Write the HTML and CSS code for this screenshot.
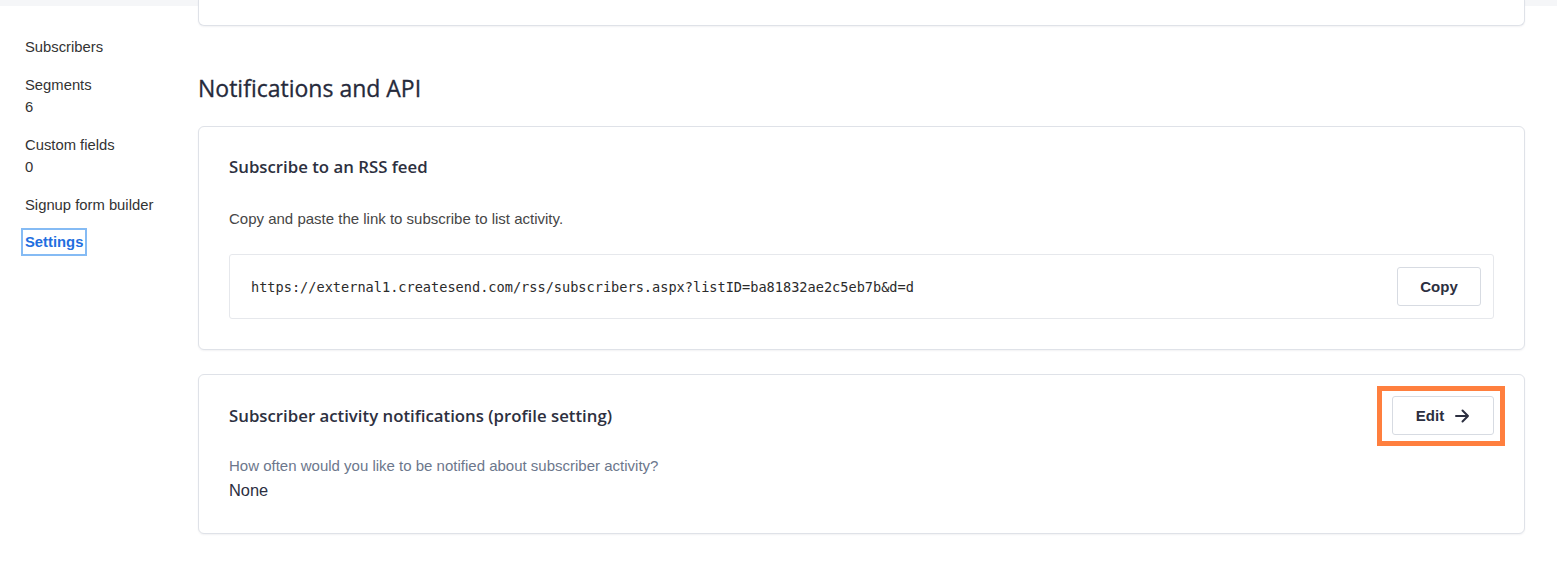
FILE: index.html
```html
<!DOCTYPE html>
<html lang="en">
<head>
    <meta charset="UTF-8">
    <meta name="viewport" content="width=device-width, initial-scale=1.0">
    <title>List settings</title>
    <link rel="stylesheet" href="styles.css">
</head>
<body>
    <div class="topbar"></div>
    <div class="layout">
        <nav class="sidebar">
            <a class="nav-item" href="#">Subscribers</a>
            <a class="nav-item" href="#">Segments<span class="count">6</span></a>
            <a class="nav-item" href="#">Custom fields<span class="count">0</span></a>
            <a class="nav-item" href="#">Signup form builder</a>
            <a class="nav-item active" href="#">Settings</a>
        </nav>

        <main class="content">
            <div class="card card-tail"></div>

            <h2 class="section-title">Notifications and API</h2>

            <section class="card">
                <h3 class="card-title">Subscribe to an RSS feed</h3>
                <p class="card-text">Copy and paste the link to subscribe to list activity.</p>
                <div class="link-box">
                    <code class="link">https://external1.createsend.com/rss/subscribers.aspx?listID=ba81832ae2c5eb7b&amp;d=d</code>
                    <button class="btn">Copy</button>
                </div>
            </section>

            <section class="card">
                <div class="card-head">
                    <h3 class="card-title">Subscriber activity notifications (profile setting)</h3>
                    <div class="highlight">
                        <button class="btn btn-edit">
                            Edit
                            <svg width="16" height="14" viewBox="0 0 16 14" fill="none" stroke="currentColor" stroke-width="2" stroke-linecap="round" stroke-linejoin="round">
                                <path d="M2 7h12M8.5 1.5 14 7l-5.5 5.5"/>
                            </svg>
                        </button>
                    </div>
                </div>
                <p class="field-label">How often would you like to be notified about subscriber activity?</p>
                <p class="field-value">None</p>
            </section>
        </main>
    </div>
</body>
</html>
```

FILE: styles.css
```css
body {
    margin: 0;
    background-color: #fff;
    font-family: 'Liberation Sans', Arial, sans-serif;
    color: #333;
}

.topbar {
    height: 6px;
    background-color: #f5f6f8;
}

.layout {
    display: flex;
}

/* left navigation */
.sidebar {
    width: 198px;
    flex-shrink: 0;
    padding: 30px 0 0 25px;
    box-sizing: border-box;
    display: flex;
    flex-direction: column;
    align-items: flex-start;
    gap: 16px;
}

.nav-item {
    display: flex;
    flex-direction: column;
    font-size: 14.8px;
    line-height: 22px;
    color: #333;
    text-decoration: none;
}

.nav-item .count {
    color: #333;
}

.nav-item.active {
    color: #1f6fe0;
    font-weight: bold;
    outline: 2px solid #85bbf4;
    outline-offset: 1px;
    padding: 0 1px;
    margin-left: -1px;
    margin-top: -1px;
}

/* main column */
.content {
    width: 1327px;
    margin-top: -6px;
}

.card {
    background: #fff;
    border: 1px solid #dfe2e8;
    border-radius: 6px;
    box-shadow: 0 1px 2px rgba(30, 40, 60, 0.06);
    padding: 30px 30px 30px;
    margin-bottom: 24px;
}

.card-tail {
    height: 25px;
    padding: 0;
    border-top: none;
    border-radius: 0 0 6px 6px;
    margin-bottom: 0;
}

.section-title {
    font-family: 'Open Sans', 'Noto Sans', sans-serif;
    font-weight: 500;
    font-size: 23px;
    line-height: 28px;
    color: #262a3b;
    -webkit-text-stroke: 0.3px #262a3b;
    margin: 48px 0 24px;
}

.card-title {
    font-family: 'Open Sans', 'Noto Sans', sans-serif;
    font-weight: 600;
    font-size: 16.8px;
    line-height: 20px;
    color: #2d3040;
    margin: 0;
}

.card-text {
    font-size: 15px;
    line-height: 22px;
    color: #464646;
    margin: 31px 0 24px;
}

.link-box {
    display: flex;
    justify-content: space-between;
    align-items: center;
    border: 1px solid #e6e8ec;
    border-radius: 3px;
    padding: 12px 12px 12px 21px;
}

.link {
    font-family: 'DejaVu Sans Mono', 'Liberation Mono', monospace;
    font-size: 13.6px;
    color: #2b2b2b;
}

.btn {
    font-family: 'Liberation Sans', Arial, sans-serif;
    font-weight: bold;
    font-size: 15px;
    color: #2c2f40;
    background: #fff;
    border: 1px solid #d7dbe2;
    border-radius: 3px;
    height: 39px;
    width: 84px;
    cursor: pointer;
}

.card-head {
    display: flex;
    justify-content: space-between;
    align-items: center;
    margin-top: -9px;
}

.highlight {
    position: relative;
}

/* orange call-out ring around the edit button */
.highlight::after {
    content: "";
    position: absolute;
    top: -10px;
    bottom: -11px;
    left: -15px;
    right: -11px;
    border: 5px solid #ff7f3e;
    pointer-events: none;
}

.btn-edit {
    width: 102px;
    display: flex;
    align-items: center;
    justify-content: center;
    gap: 10px;
}

.field-label {
    font-size: 15px;
    line-height: 18px;
    color: #6c778c;
    margin: 22px 0 4px;
}

.field-value {
    font-size: 16.4px;
    line-height: 22px;
    color: #2b2e3f;
    margin: 0 0 2px;
}
```
